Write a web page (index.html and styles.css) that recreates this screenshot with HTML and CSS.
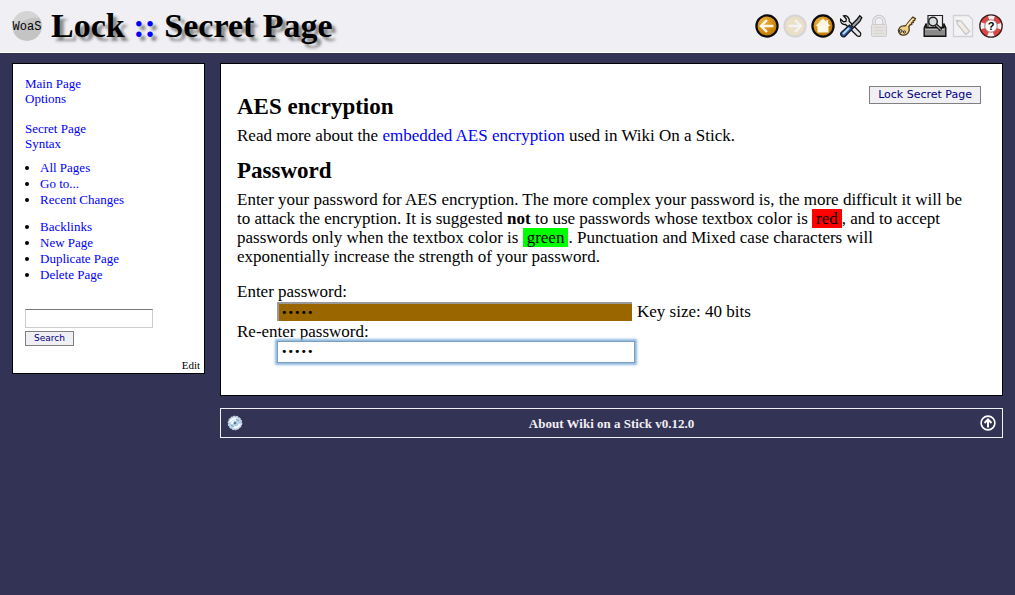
FILE: index.html
```html
<!DOCTYPE html>
<html lang="en">
<head>
  <meta charset="UTF-8" />
  <title>Lock :: Secret Page</title>
  <meta name="viewport" content="width=device-width, initial-scale=1.0" />
  <link rel="stylesheet" href="styles.css">
</head>
<body>

  <header class="header">
    <div class="logo">WoaS</div>
    <h1>Lock <span class="colons">::</span> Secret Page</h1>
    <nav class="toolbar">
      <a href="#" title="Back">
        <svg viewBox="0 0 24 24">
          <defs>
            <radialGradient id="gold" cx="0.35" cy="0.3" r="0.8">
              <stop offset="0" stop-color="#efb040" />
              <stop offset="0.6" stop-color="#d08a10" />
              <stop offset="1" stop-color="#b07000" />
            </radialGradient>
          </defs>
          <circle cx="12" cy="12" r="10.6" fill="url(#gold)" stroke="#0c0c0c" stroke-width="2.2" />
          <path d="M18.5 12H7M12 6L6 12l6 6" fill="none" stroke="#fff8e6" stroke-width="2.4" />
        </svg>
      </a>
      <a href="#" title="Forward" class="off">
        <svg viewBox="0 0 24 24">
          <circle cx="12" cy="12" r="10.6" fill="#e0b040" stroke="#888" stroke-width="2" />
          <path d="M5.5 12H17M12 6l6 6-6 6" fill="none" stroke="#fff" stroke-width="2.4" />
        </svg>
      </a>
      <a href="#" title="Home">
        <svg viewBox="0 0 24 24">
          <circle cx="12" cy="12" r="10.6" fill="url(#gold)" stroke="#0c0c0c" stroke-width="2.2" />
          <path d="M12 4.5l-7.5 7.5h2v6.5h11V12h2l-2.3-2.3V6h-2v1.7z" fill="#fff8e6" />
        </svg>
      </a>
      <a href="#" title="Options">
        <svg viewBox="0 0 24 24">
          <path d="M4.5 1.8l2.8 3.2-.4 2.4-2.4.4L1.6 5.2C1 8.3 3 10.9 6.5 10.5L18 21.8c2.5 1.8 5-1 3.3-3.2L10.2 7.3C10.8 3.8 8 1 4.5 1.8z" fill="#e2e4e6" stroke="#111" stroke-width="1.3" />
          <path d="M20.8 1.8l2 1.8-1.8 3.6-6.4 6.4-2.4-2.4 6.1-6.2z" fill="#9aa4b0" stroke="#111" stroke-width="1.3" />
          <path d="M10.4 11.2l3.2 3.2-7.7 8c-2.2 1.4-5.2-1.2-3.8-3.8z" fill="#2f5fa8" stroke="#111a33" stroke-width="1.4" />
          <path d="M10 14l-6 6" stroke="#b9def8" stroke-width="1.8" />
        </svg>
      </a>
      <a href="#" title="Lock" class="off">
        <svg viewBox="0 0 24 24">
          <path d="M7 11V7.5a5 5 0 0 1 10 0V11" fill="none" stroke="#555" stroke-width="3.6" />
          <path d="M7 11V7.5a5 5 0 0 1 10 0V11" fill="none" stroke="#ddd" stroke-width="1.6" />
          <rect x="4.5" y="10.5" width="15" height="12" rx="1" fill="#c8b898" stroke="#666" />
          <path d="M7 13.5h10M7 16.5h10M7 19.5h10" stroke="#888" />
        </svg>
      </a>
      <a href="#" title="Unlock">
        <svg viewBox="0 0 24 24">
          <path d="M17.8 3l2.6 1.6-.8 1.8-1.6.6.4 1.5-1.8.4.2 1.6-1.8.4-1.2 1.9c1 3.2.2 5.6-1.8 7.2-2.8 2-7 1.4-8.2-1.8-1.1-3.7 1.6-6.6 5.4-6.2 1.5-.1 2.1-.8 2.9-2z" fill="#f0cf88" stroke="#4d3c1c" stroke-width="1.3" />
          <path d="M12 11.4l5.7-6.6" stroke="#fff0bd" stroke-width="1.3" />
          <circle cx="5.8" cy="17" r="1.3" fill="#fff" stroke="#222" />
          <circle cx="9.4" cy="18" r="1.1" fill="#fff" stroke="#222" />
        </svg>
      </a>
      <a href="#" title="Search">
        <svg viewBox="0 0 24 24">
          <path d="M5 1.5h14.5V14H5z" fill="#eee" stroke="#222" stroke-width="1.2" />
          <path d="M3.2 9.5v4h17.6v-4l2 4.5v8.3H1.2V14z" fill="#8a8a88" stroke="#111" stroke-width="1.4" />
          <path d="M2.5 15.5h19" stroke="#bbb" />
          <circle cx="10" cy="7.6" r="4.3" fill="#d8dde0" stroke="#222" stroke-width="1.5" />
          <path d="M13 11l5.2 5" stroke="#111" stroke-width="3.4" />
          <path d="M13.2 11.2l4.6 4.4" stroke="#aaa" stroke-width="1.2" />
        </svg>
      </a>
      <a href="#" title="Edit" class="off">
        <svg viewBox="0 0 24 24">
          <path d="M2.5 1.5h15l4 4v17h-19z" fill="#fff" stroke="#777" stroke-width="1.3" />
          <path d="M5.5 6.5l4.5.3 8.6 10.7-3.7 3-8.4-10z" fill="#fae8a8" stroke="#555" stroke-width="1.3" />
          <path d="M5.5 6.5l2.5.2-2 1.6z" fill="#333" />
        </svg>
      </a>
      <a href="#" title="Help">
        <svg viewBox="0 0 24 24">
          <circle cx="12" cy="12" r="8.7" fill="none" stroke="#f4f0ef" stroke-width="5" />
          <circle cx="12" cy="12" r="8.7" fill="none" stroke="#dc4644" stroke-width="5" stroke-dasharray="7.8 5.87" stroke-dashoffset="-3" />
          <circle cx="12" cy="12" r="11.2" fill="none" stroke="#3a2020" stroke-width="1.3" />
          <circle cx="12" cy="12" r="6.2" fill="#fff" stroke="#906060" stroke-width="0.8" />
          <text x="12" y="16" text-anchor="middle" class="help-mark">?</text>
        </svg>
      </a>
    </nav>
  </header>

  <div class="page">
    <aside class="menu">
      <p><a href="#">Main Page</a><br><a href="#">Options</a></p>
      <p><a href="#">Secret Page</a><br><a href="#">Syntax</a></p>
      <ul>
        <li><a href="#">All Pages</a></li>
        <li><a href="#">Go to...</a></li>
        <li><a href="#">Recent Changes</a></li>
      </ul>
      <ul>
        <li><a href="#">Backlinks</a></li>
        <li><a href="#">New Page</a></li>
        <li><a href="#">Duplicate Page</a></li>
        <li><a href="#">Delete Page</a></li>
      </ul>
      <form class="search">
        <input type="text" aria-label="Search text">
        <button type="button" class="btn">Search</button>
      </form>
      <a href="#" class="edit">Edit</a>
    </aside>

    <div class="column">
      <main class="content">
        <button type="button" class="btn lock-btn">Lock Secret Page</button>
        <h2>AES encryption</h2>
        <p>Read more about the <a href="#">embedded AES encryption</a> used in Wiki On a Stick.</p>
        <h2>Password</h2>
        <p>Enter your password for AES encryption. The more complex your password is, the more difficult it will be<br>
        to attack the encryption. It is suggested <b>not</b> to use passwords whose textbox color is <span class="red">red</span>, and to accept<br>
        passwords only when the textbox color is <span class="green">green</span>. Punctuation and Mixed case characters will<br>
        exponentially increase the strength of your password.</p>
        <form class="passwords">
          <label for="pw1">Enter password:</label>
          <div class="field">
            <input type="password" id="pw1" class="weak" value="abcde">
            <span>Key size: 40 bits</span>
          </div>
          <label for="pw2">Re-enter password:</label>
          <div class="field">
            <input type="password" id="pw2" class="active" value="abcde">
          </div>
        </form>
      </main>

      <footer class="footer">
        <svg class="disc" viewBox="0 0 16 16">
          <circle cx="8" cy="8" r="6.8" fill="#b9d3e6" stroke="#e8f2f8" stroke-dasharray="2 1" />
          <path d="M3 7c1-3 4-4 7-3M13 9c-1 3-4 4-7 3M5 9c0-2 2-3 4-3" fill="none" stroke="#f4fafd" stroke-width="2" />
          <path d="M4 10l3 2M9 4l3 2" stroke="#7f9fbd" />
          <circle cx="8" cy="8" r="1.4" fill="#5d7c9c" />
        </svg>
        <a href="#">About Wiki on a Stick v0.12.0</a>
        <a href="#" title="Top">
          <svg viewBox="0 0 16 16">
            <circle cx="8" cy="8" r="6.9" fill="none" stroke="#fff" stroke-width="1.6" />
            <path d="M8 12.5V5M4.5 8L8 4.5 11.5 8" fill="none" stroke="#fff" stroke-width="2" />
          </svg>
        </a>
      </footer>
    </div>
  </div>

</body>
</html>
```

FILE: styles.css
```css
body {
  margin: 0;
  background: #333355;
  color: #000;
  font-family: "Liberation Serif", serif;
  font-size: 17px;
  line-height: 19px;
}

a {
  color: #0000ff;
  text-decoration: none;
}

p {
  margin: 0;
}

.header {
  display: flex;
  align-items: center;
  height: 52px;
  padding: 0 12px;
  background: #f0eff4;
  border-bottom: 1px solid #fff;
}

.logo {
  width: 30px;
  height: 30px;
  border-radius: 50%;
  background: radial-gradient(circle at 80% 100%, #c4c4c4 60%, #d4d4d4 62%);
  font-family: "Liberation Mono", monospace;
  font-size: 12px;
  line-height: 32px;
  display: flex;
  justify-content: center;
}

h1 {
  flex: 1;
  margin: 0 0 0 9px;
  font-size: 34px;
  line-height: 40px;
  text-shadow: 4px 4px 3px #888;
}

.colons {
  color: #0000ff;
}

.toolbar {
  display: flex;
  gap: 4px;
}

.toolbar a,
.toolbar svg {
  display: block;
  width: 24px;
  height: 24px;
}

.toolbar .off {
  opacity: 0.25;
}

.help-mark {
  font-family: "Liberation Sans", sans-serif;
  font-size: 11px;
  font-weight: bold;
}

.page {
  display: flex;
  align-items: flex-start;
  gap: 15px;
  padding: 10px 12px;
}

.menu {
  box-sizing: border-box;
  width: 193px;
  padding: 12px 4px 0 12px;
  background: #fff;
  border: 1px solid #000;
  font-size: 13px;
  line-height: 15px;
}

.menu p + p {
  margin-top: 15px;
}

.menu ul {
  margin: 9px 0 0;
  padding-left: 15px;
  line-height: 16px;
}

.menu ul + ul {
  margin-top: 11px;
}

.search {
  display: flex;
  flex-direction: column;
  align-items: flex-start;
  gap: 3px;
  margin-top: 26px;
}

.search input {
  box-sizing: border-box;
  width: 128px;
  height: 19px;
  border: 1px solid #ccc;
  border-top: 1px solid #777;
}

.btn {
  padding: 0 8px;
  background: #f0eff4;
  border: 1px solid #808080;
  color: #000080;
  font-family: "DejaVu Sans", sans-serif;
  font-size: 9px;
  line-height: 13px;
}

.edit {
  display: block;
  margin-top: 12px;
  color: #000;
  font-size: 11px;
  text-align: right;
}

.column {
  flex: 1;
}

.content {
  padding: 22px 21px 33px 16px;
  background: #fff;
  border: 1px solid #000;
}

.lock-btn {
  float: right;
  font-size: 11px;
  line-height: 16px;
}

h2 {
  margin: 0 0 7px;
  padding-top: 14px;
  font-size: 23px;
  line-height: 24px;
}

.content h2:first-of-type {
  padding-top: 9px;
}

.red,
.green {
  padding: 0 4px;
  background: #ff0000;
}

.green {
  background: #00ff00;
}

.passwords {
  margin-top: 16px;
}

.passwords label {
  display: block;
}

.field {
  display: flex;
  align-items: center;
  gap: 5px;
  height: 21px;
  margin-left: 40px;
}

.field input {
  box-sizing: border-box;
  width: 355px;
  height: 19px;
  padding: 0 2px;
  font-family: "DejaVu Sans", sans-serif;
  font-size: 11px;
}

.field .weak {
  background: #996600;
  border: 0 solid #999;
  border-width: 2px 0 0 2px;
}

.field .active {
  width: 358px;
  height: 22px;
  padding: 0 3px;
  border: 1px solid #7f9fbf;
  box-shadow: 0 0 2px 2px #8fb9e2;
}

.footer {
  display: flex;
  align-items: center;
  justify-content: space-between;
  height: 28px;
  margin-top: 12px;
  padding: 0 6px;
  border: 1px solid #f0eff4;
  font-size: 13px;
  font-weight: bold;
}

.footer a {
  color: #f0eff4;
}

.footer svg {
  display: block;
  width: 16px;
  height: 16px;
}
```
